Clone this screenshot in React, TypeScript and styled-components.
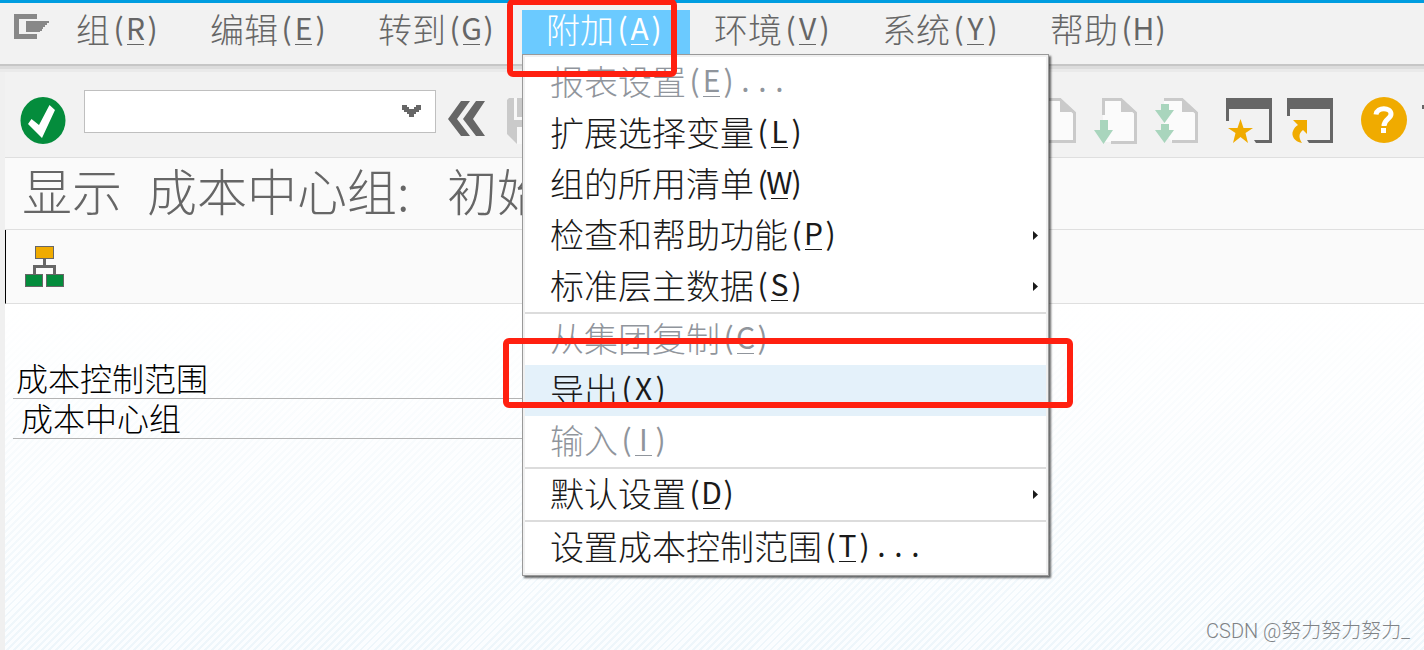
import React from 'react';
import styled, { createGlobalStyle } from 'styled-components';

const cjk = `'Noto Sans CJK SC', sans-serif`;
const latin = `'Liberation Sans Narrow', 'Noto Sans CJK SC', sans-serif`;

const GlobalStyle = createGlobalStyle`
  *, *::before, *::after { box-sizing: border-box; }
  html, body { margin: 0; }
  body { background: #f2f2f2; font-family: ${cjk}; font-weight: 300; overflow: hidden; }
  button, input { font: inherit; color: inherit; }
  button { border: 0; padding: 0; background: none; cursor: pointer; text-align: left; }
  svg { display: block; }
`;

const Screen = styled.div`
  position: relative;
  min-height: 100vh;
  display: flex;
  flex-direction: column;
  overflow: hidden;
`;

const MenuBar = styled.nav`
  position: relative;
  z-index: 2;
  display: flex;
  align-items: flex-start;
  height: 66px;
  border-top: 3px solid #009de0;
  border-bottom: 2px solid #c6c6c6;
  background: #f2f2f2;
  box-shadow: 0 3px 0 #dcdcdc, 0 6px 0 #eaeaea;
`;

const SystemMenu = styled.button`
  width: 52px;
  padding: 11px 0 0 14px;
`;

const MenuEntry = styled.div`
  position: relative;
  padding-top: 7px;
`;

const MenuTitle = styled.button<{ $active?: boolean }>`
  display: flex;
  align-items: center;
  height: 44px;
  padding: 0 25px 6px 24px;
  font-size: 34px;
  line-height: 38px;
  white-space: nowrap;
  color: ${(p) => (p.$active ? '#ffffff' : '#666666')};
  background: ${(p) => (p.$active ? '#6bcaff' : 'transparent')};
`;

const Cell = styled.span<{ $key?: boolean }>`
  display: inline-flex;
  justify-content: center;
  width: 17px;
  height: 32px;
  font-family: ${latin};
  font-size: 30px;
  font-weight: 400;
  line-height: 28px;
  border-bottom: 1px solid ${(p) => (p.$key ? 'currentColor' : 'transparent')};
`;

const Dropdown = styled.div`
  position: absolute;
  top: 51px;
  left: 0;
  width: 527px;
  padding: 2px;
  border: 1px solid #999999;
  background: #ffffff;
  box-shadow: inset 0 0 0 2px #f0f0f0, 2px 2px 2px rgba(0, 0, 0, 0.6);
`;

const Group = styled.div`
  & + & { border-top: 2px solid #dcdcdc; }
`;

const Item = styled.button<{ $hot?: boolean }>`
  display: flex;
  align-items: center;
  width: 100%;
  height: 51px;
  padding: 0 8px 4px 25px;
  font-size: 34px;
  line-height: 38px;
  white-space: nowrap;
  color: #1a1a1a;
  background: ${(p) => (p.$hot ? '#e4f1fa' : 'transparent')};
  &:disabled { color: #90959c; }
`;

const Arrow = styled.svg`
  margin: 4px 0 0 auto;
`;

const Work = styled.div`
  flex: 1;
  display: flex;
  flex-direction: column;
  border-left: 5px solid #f0f0f0;
`;

const Toolbar = styled.div`
  display: flex;
  align-items: center;
  height: 92px;
  padding: 18px 0 0 15px;
  border-bottom: 1px solid #dfdfdf;
  overflow: hidden;
`;

const ToolButton = styled.button<{ $gap?: number }>`
  flex: none;
  margin-left: ${(p) => p.$gap ?? 0}px;
`;

const CommandBox = styled.div`
  display: flex;
  align-items: center;
  flex: none;
  width: 352px;
  height: 43px;
  margin: 0 12px 18px 18px;
  border: 1px solid #bfbfbf;
  background: #ffffff;
`;

const CommandInput = styled.input`
  flex: 1;
  min-width: 0;
  height: 100%;
  padding: 0 8px;
  border: 0;
  outline: 0;
  background: transparent;
  font-size: 28px;
`;

const OpenButton = styled.button`
  padding: 0 14px 2px 0;
`;

const TitleBar = styled.h1`
  display: flex;
  align-items: center;
  height: 72px;
  margin: 0;
  padding: 0 0 10px 17px;
  border-bottom: 1px solid #dfdfdf;
  background: #fafafa;
  color: #666666;
  font-size: 50px;
  font-weight: 300;
  line-height: 60px;
  white-space: nowrap;
`;

const TitleWord = styled.span`
  margin-right: 25px;
`;

const Colon = styled.span`
  display: inline-block;
  width: 25px;
`;

const AppBar = styled.div`
  height: 74px;
  padding: 16px 0 0 19px;
  border-left: 1px solid #000000;
  border-bottom: 1px solid #dfdfdf;
  background: #fafafa;
`;

const Content = styled.main`
  flex: 1;
  padding: 55px 0 0 8px;
  background:
    linear-gradient(to bottom, #ffffff 0%, rgba(255, 255, 255, 0.2) 100%),
    repeating-linear-gradient(135deg, #eaf4fa 0 2px, #fafdff 2px 5px);
`;

const Field = styled.label<{ $indent?: boolean }>`
  display: flex;
  align-items: center;
  width: 560px;
  height: 40px;
  padding: 0 0 4px ${(p) => (p.$indent ? 8 : 3)}px;
  border-bottom: 1px solid #b3b3b3;
  font-size: 32px;
  line-height: 34px;
  color: #000000;
`;

const FieldInput = styled.input`
  flex: 1;
  min-width: 0;
  height: 34px;
  border: 0;
  background: transparent;
`;

const Mark = styled.div`
  position: absolute;
  z-index: 3;
  border: 6px solid #ff2010;
  border-radius: 6px;
  pointer-events: none;
`;

const MenuMark = styled(Mark)`
  top: -1px;
  left: 507px;
  width: 170px;
  height: 78px;
`;

const ItemMark = styled(Mark)`
  top: 338px;
  left: 503px;
  width: 570px;
  height: 70px;
`;

const Watermark = styled.div`
  position: absolute;
  right: 14px;
  bottom: 6px;
  font-family: Roboto, ${cjk};
  font-size: 20px;
  line-height: 26px;
  color: #808386;
`;

type Entry = { text: string; hot?: boolean; off?: boolean; sub?: boolean; k: string; tail?: string };

const titles = [
  ['组', 'R'],
  ['编辑', 'E'],
  ['转到', 'G'],
  ['附加', 'A'],
  ['环境', 'V'],
  ['系统', 'Y'],
  ['帮助', 'H'],
];

const groups: Entry[][] = [
  [
    { text: '报表设置', k: 'E', off: true, tail: '...' },
    { text: '扩展选择变量', k: 'L' },
    { text: '组的所用清单', k: 'W' },
    { text: '检查和帮助功能', k: 'P', sub: true },
    { text: '标准层主数据', k: 'S', sub: true },
  ],
  [
    { text: '从集团复制', k: 'C', off: true },
    { text: '导出', k: 'X', hot: true },
    { text: '输入', k: 'I', off: true },
  ],
  [{ text: '默认设置', k: 'D', sub: true }],
  [{ text: '设置成本控制范围', k: 'T', tail: '...' }],
];

const Label = ({ text, k, tail = '' }: { text: string; k: string; tail?: string }) => (
  <>
    <span>{text}</span>
    <Cell>(</Cell>
    <Cell $key>{k}</Cell>
    <Cell>)</Cell>
    {[...tail].map((c, i) => (
      <Cell key={i}>{c}</Cell>
    ))}
  </>
);

const PageOutline = ({ cut }: { cut: string }) => (
  <>
    <path d="M10 2H28L42 15V45H10Z" fill="#fbfbfb" />
    <path d={cut} fill="none" stroke="#cacaca" strokeWidth="3" />
    <path d="M28 1L43 15H28Z" fill="#cacaca" />
  </>
);

export default function App() {
  return (
    <Screen>
      <GlobalStyle />
      <MenuBar>
        <SystemMenu aria-label="系统菜单">
          <svg width="36" height="25" viewBox="0 0 36 25" fill="#888888" shapeRendering="crispEdges">
            <path d="M0 0H23V5H5V20H23V25H0Z" />
            <path d="M12 7H35V9H33V11H31V13H29V15H28V17H26V18H12Z" />
          </svg>
        </SystemMenu>
        {titles.map(([text, k]) => (
          <MenuEntry key={k}>
            <MenuTitle $active={k === 'A'}>
              <Label text={text} k={k} />
            </MenuTitle>
            {k === 'A' && (
              <Dropdown>
                {groups.map((g, i) => (
                  <Group key={i}>
                    {g.map((e) => (
                      <Item key={e.k} disabled={e.off} $hot={e.hot}>
                        <Label text={e.text} k={e.k} tail={e.tail} />
                        {e.sub && (
                          <Arrow width="5" height="9" viewBox="0 0 5 9">
                            <path d="M0 0L5 4.500L0 9Z" fill="#1a1a1a" />
                          </Arrow>
                        )}
                      </Item>
                    ))}
                  </Group>
                ))}
              </Dropdown>
            )}
          </MenuEntry>
        ))}
      </MenuBar>
      <Work>
        <Toolbar>
          <ToolButton aria-label="回车">
            <svg width="46" height="48" viewBox="0 0 46 48">
              <ellipse cx="23" cy="23.500" rx="22.500" ry="23.500" fill="#048c3c" />
              <path d="M8 27L11.500 22L19 28L29.500 8L35 13L22 41Z" fill="#fff" />
            </svg>
          </ToolButton>
          <CommandBox>
            <CommandInput aria-label="命令" />
            <OpenButton aria-label="打开">
              <svg width="19" height="12" viewBox="0 0 19 12" shapeRendering="crispEdges">
                <path d="M0 0H5V2H7V4H12V2H14V0H19V5H17V7H14V9H12V12H7V9H5V7H2V5H0Z" fill="#666" />
              </svg>
            </OpenButton>
          </CommandBox>
          <ToolButton aria-label="返回">
            <svg width="38" height="40" viewBox="0 0 38 40" fill="#666">
              <path d="M13 0H22L9 18L22 35H13L0 18Z" />
              <path d="M28 0H37L25 18L37 35H28L15 18Z" />
            </svg>
          </ToolButton>
          <ToolButton aria-label="保存" $gap={21}>
            <svg width="46" height="46" viewBox="0 0 46 46" fill="#cacaca">
              <path d="M2 0H46V46H10L0 36V2Z" />
              <path d="M7 0H10V19H36V0H39V22H7ZM10 29H36V46H10Z" fill="#f8f8f8" />
            </svg>
          </ToolButton>
          <ToolButton aria-label="上一页" $gap={479}>
            <svg width="46" height="48" viewBox="0 0 46 48">
              <PageOutline cut="M10 2.500H28L42.500 16V44.500H10Z" />
            </svg>
          </ToolButton>
          <ToolButton aria-label="下一页" $gap={15}>
            <svg width="46" height="48" viewBox="0 0 46 48">
              <PageOutline cut="M10.500 18V2.500H28L42.500 16V45.500H18" />
              <path d="M7 23H15V33H20L10.500 47L1 33H7Z" fill="#a9d5bd" />
            </svg>
          </ToolButton>
          <ToolButton aria-label="末页" $gap={15}>
            <svg width="46" height="48" viewBox="0 0 46 48">
              <path d="M10 2H28L42 15V45H18L10 36Z" fill="#fbfbfb" />
              <path d="M10 2.500H28L42.500 16V44.500H18" fill="none" stroke="#cacaca" strokeWidth="3" />
              <path d="M28 1L43 15H28Z" fill="#cacaca" />
              <path d="M7 7H15V13H20L10.500 26L1 13H7ZM7 27H15V33H20L10.500 46L1 33H7Z" fill="#a9d5bd" />
            </svg>
          </ToolButton>
          <ToolButton aria-label="新建会话" $gap={26}>
            <svg width="47" height="46" viewBox="0 0 47 46">
              <path d="M0 0H46V45H30L28 42H43V11H3V23H0Z" fill="#666" />
              <path d="M14.500 21L17.500 30H27L19.500 35L22 45L14.500 39L7 45L9.500 35L2 30H11.500Z" fill="#f0ab00" />
            </svg>
          </ToolButton>
          <ToolButton aria-label="创建快捷方式" $gap={14}>
            <svg width="47" height="46" viewBox="0 0 47 46">
              <path d="M0 0H46V45H22L20 42H43V11H3V18H0Z" fill="#666" />
              <path d="M6 22H20V36L16 32C11 36 12 40 15 45C7 44 4 37 6 33C7 30 9 28 11 27Z" fill="#f0ab00" />
            </svg>
          </ToolButton>
          <ToolButton aria-label="帮助" $gap={27}>
            <svg width="46" height="48" viewBox="0 0 46 48">
              <circle cx="23" cy="23" r="23" fill="#f0ab00" />
              <path d="M15 17.500C16 9.500 30 10 30 17C30 22 23 22 23 29" fill="none" stroke="#fff" strokeWidth="5" />
              <path d="M20 31H25V36H20Z" fill="#fff" />
            </svg>
          </ToolButton>
          <ToolButton aria-label="自定义布局" $gap={15}>
            <svg width="46" height="46" viewBox="0 0 46 46">
              <path d="M0 7H46V11H0Z" fill="#666" />
            </svg>
          </ToolButton>
        </Toolbar>
        <TitleBar>
          <TitleWord>显示</TitleWord>
          <TitleWord>
            成本中心组<Colon>:</Colon>
          </TitleWord>
          <TitleWord>初始</TitleWord>
        </TitleBar>
        <AppBar>
          <ToolButton aria-label="层次结构">
            <svg width="39" height="42" viewBox="0 0 39 42" shapeRendering="crispEdges">
              <path d="M18 12H21V19H31V29H28V22H11V29H8V19H18Z" fill="#666" />
              <g stroke="#666">
                <path d="M10.500 0.500H28.500V12.500H10.500Z" fill="#f0ab00" />
                <path d="M0.500 28.500H17.500V40.500H0.500ZM21.500 28.500H38.500V40.500H21.500Z" fill="#048c3c" />
              </g>
            </svg>
          </ToolButton>
        </AppBar>
        <Content>
          <Field>
            成本控制范围
            <FieldInput />
          </Field>
          <Field $indent>
            成本中心组
            <FieldInput />
          </Field>
        </Content>
      </Work>
      <MenuMark />
      <ItemMark />
      <Watermark>CSDN @努力努力努力_</Watermark>
    </Screen>
  );
}
